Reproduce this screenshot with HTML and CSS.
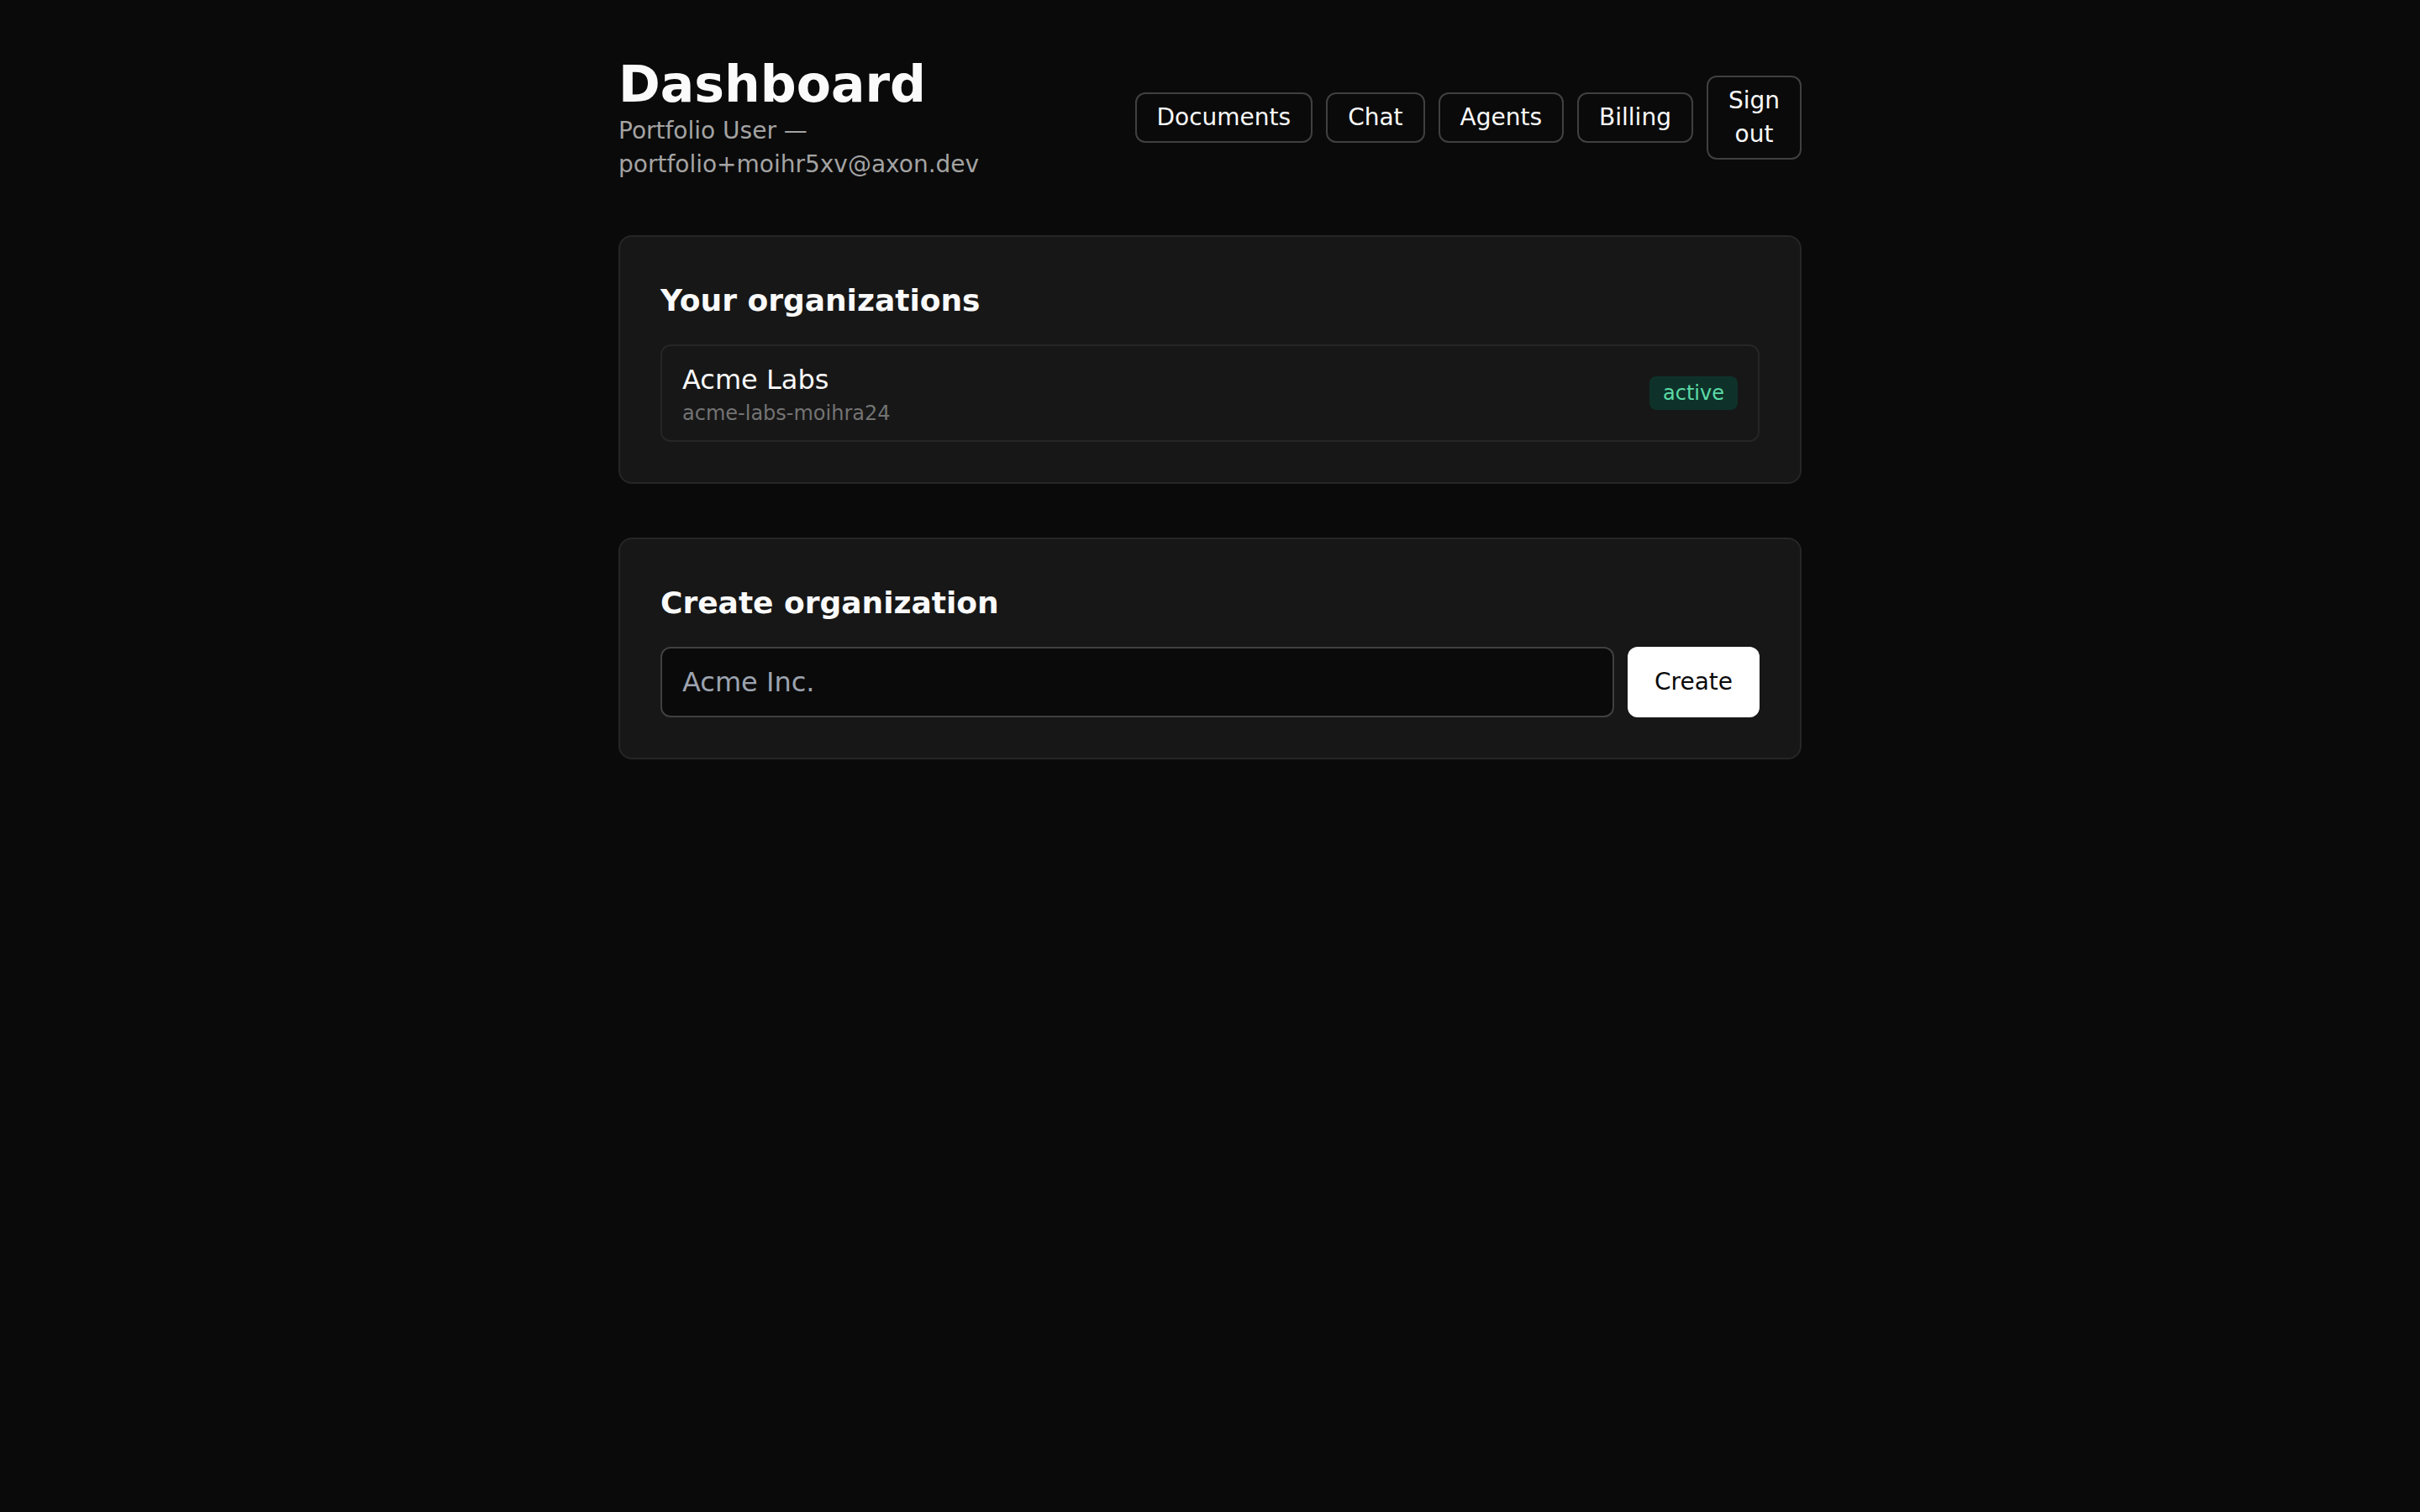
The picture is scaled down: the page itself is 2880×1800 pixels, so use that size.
FILE: index.html
```html
<!DOCTYPE html>
<html lang="en">
<head>
<meta charset="utf-8">
<title>Dashboard</title>
<link rel="stylesheet" href="styles.css">
</head>
<body>
<main class="page">
  <header class="top">
    <div class="who">
      <h1 class="title">Dashboard</h1>
      <p class="sub">Portfolio User — portfolio+moihr5xv@axon.dev</p>
    </div>
    <nav class="nav">
      <button class="navbtn" type="button">Documents</button>
      <button class="navbtn" type="button">Chat</button>
      <button class="navbtn" type="button">Agents</button>
      <button class="navbtn" type="button">Billing</button>
      <button class="navbtn" type="button">Sign out</button>
    </nav>
  </header>

  <section class="card">
    <h2 class="card-title">Your organizations</h2>
    <ul class="org-list">
      <li class="org">
        <div class="org-text">
          <div class="org-name">Acme Labs</div>
          <div class="org-slug">acme-labs-moihra24</div>
        </div>
        <span class="badge">active</span>
      </li>
    </ul>
  </section>

  <section class="card">
    <h2 class="card-title">Create organization</h2>
    <form class="create-form" onsubmit="return false">
      <input class="field" type="text" placeholder="Acme Inc.">
      <button class="primary" type="submit">Create</button>
    </form>
  </section>
</main>
</body>
</html>
```

FILE: styles.css
```css
* {
  box-sizing: border-box;
}

html, body {
  margin: 0;
  padding: 0;
  background: #0a0a0a;
}

body {
  font-family: "DejaVu Sans", sans-serif;
  color: #fafafa;
  min-height: 1800px;
}

.page {
  max-width: 1536px;
  margin: 0 auto;
  padding: 64px;
}

.top {
  display: flex;
  justify-content: space-between;
  align-items: center;
  gap: 32px;
  margin-bottom: 64px;
}

.title {
  margin: 0;
  font-size: 60px;
  line-height: 72px;
  font-weight: 700;
  color: #fafafa;
}

.sub {
  margin: 0;
  font-size: 28px;
  line-height: 40px;
  color: #a3a3a3;
}

.nav {
  display: flex;
  align-items: center;
  gap: 16px;
}

.navbtn {
  font-family: "DejaVu Sans", sans-serif;
  font-size: 28px;
  line-height: 40px;
  color: #fafafa;
  background: transparent;
  border: 2px solid #404040;
  border-radius: 12px;
  padding: 8px 24px;
  text-align: center;
  cursor: pointer;
}

.card {
  background: #171717;
  border: 2px solid #262626;
  border-radius: 16px;
  padding: 48px;
  margin-bottom: 64px;
}

.card-title {
  margin: 0 0 24px;
  font-size: 36px;
  line-height: 56px;
  font-weight: 700;
  color: #fafafa;
}

.org-list {
  list-style: none;
  margin: 0;
  padding: 0;
}

.org {
  display: flex;
  justify-content: space-between;
  align-items: center;
  border: 2px solid #262626;
  border-radius: 12px;
  padding: 16px 24px;
}

.org-name {
  font-size: 32px;
  line-height: 48px;
  color: #fafafa;
}

.org-slug {
  font-size: 24px;
  line-height: 32px;
  color: #737373;
}

.badge {
  font-size: 24px;
  line-height: 32px;
  padding: 4px 16px;
  border-radius: 8px;
  background: #0e3229;
  color: #5cdba7;
}

.create-form {
  display: flex;
  gap: 16px;
}

.field {
  flex: 1;
  min-width: 0;
  font-family: "DejaVu Sans", sans-serif;
  font-size: 32px;
  line-height: 48px;
  padding: 16px 24px;
  color: #fafafa;
  background: #0a0a0a;
  border: 2px solid #404040;
  border-radius: 12px;
  outline: none;
}

.field::placeholder {
  color: #9ca3af;
}

.primary {
  font-family: "DejaVu Sans", sans-serif;
  font-size: 28px;
  line-height: 40px;
  padding: 0 32px;
  background: #ffffff;
  color: #0a0a0a;
  border: none;
  border-radius: 12px;
  cursor: pointer;
}
```
